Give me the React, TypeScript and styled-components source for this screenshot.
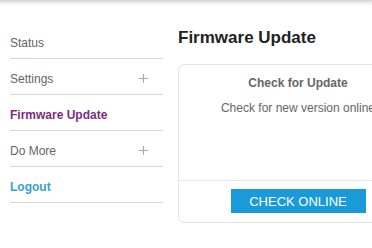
import styled, { createGlobalStyle } from "styled-components";

const GlobalStyle = createGlobalStyle`
  html, body {
    margin: 0;
    padding: 0;
    background: #fff;
    overflow: hidden;
  }
  body {
    font-family: "Liberation Sans", Arial, sans-serif;
  }
`;

const TopShade = styled.div`
  height: 6px;
  background: linear-gradient(#d4d4d4, #f4f4f4 60%, #fff);
`;

const Layout = styled.div`
  display: flex;
  align-items: flex-start;
  padding-left: 10px;
  gap: 15px;
`;

const Sidebar = styled.nav`
  width: 153px;
  flex-shrink: 0;
  margin-top: 18px;
`;

const NavItem = styled.div<{ $color?: string; $bold?: boolean }>`
  display: flex;
  align-items: center;
  justify-content: space-between;
  height: 35px;
  padding-top: 4px;
  box-sizing: border-box;
  border-bottom: 1px solid #d6d6d6;
  margin-bottom: 1px;
  font-size: 12px;
  color: ${(p) => p.$color || "#666"};
  font-weight: ${(p) => (p.$bold ? 700 : 400)};
`;

const PlusIcon = styled.svg`
  width: 9px;
  height: 9px;
  margin-right: 15px;
  margin-top: -2px;
`;

const Main = styled.main`
  flex-shrink: 0;
  margin-top: 22px;
`;

const Title = styled.h1`
  margin: 0;
  font-size: 17px;
  line-height: 20px;
  font-weight: 700;
  color: #222;
`;

const Card = styled.section`
  width: 240px;
  margin-top: 16px;
  border: 1px solid #e4e4e4;
  border-radius: 6px;
  box-sizing: border-box;
  color: #666;
  font-size: 12px;
`;

const CardBody = styled.div`
  height: 116px;
  padding-top: 11px;
  box-sizing: border-box;
  text-align: center;
  border-bottom: 1px solid #e8e8e8;
`;

const CardHeading = styled.div`
  font-weight: 700;
  line-height: 14px;
`;

const CardText = styled.div`
  margin-top: 11px;
  line-height: 14px;
`;

const CardFooter = styled.div`
  display: flex;
  justify-content: center;
  padding: 8px 0 9px;
`;

const Button = styled.button`
  width: 135px;
  height: 24px;
  border: none;
  background: #1a9ad9;
  color: #fff;
  font-family: "Liberation Sans", Arial, sans-serif;
  font-size: 13px;
  padding: 0;
`;

function Plus() {
  return (
    <PlusIcon viewBox="0 0 9 9">
      <path d="M4.5 0V9M0 4.5H9" stroke="#aaa" strokeWidth="1" />
    </PlusIcon>
  );
}

const navItems = [
  { label: "Status" },
  { label: "Settings", plus: true },
  { label: "Firmware Update", color: "#7d2d81", bold: true },
  { label: "Do More", plus: true },
  { label: "Logout", color: "#36a2cc", bold: true },
];

export default function App() {
  return (
    <>
      <GlobalStyle />
      <TopShade />
      <Layout>
        <Sidebar>
          {navItems.map((item) => (
            <NavItem key={item.label} $color={item.color} $bold={item.bold}>
              <span>{item.label}</span>
              {item.plus && <Plus />}
            </NavItem>
          ))}
        </Sidebar>
        <Main>
          <Title>Firmware Update</Title>
          <Card>
            <CardBody>
              <CardHeading>Check for Update</CardHeading>
              <CardText>Check for new version online</CardText>
            </CardBody>
            <CardFooter>
              <Button>CHECK ONLINE</Button>
            </CardFooter>
          </Card>
        </Main>
      </Layout>
    </>
  );
}
